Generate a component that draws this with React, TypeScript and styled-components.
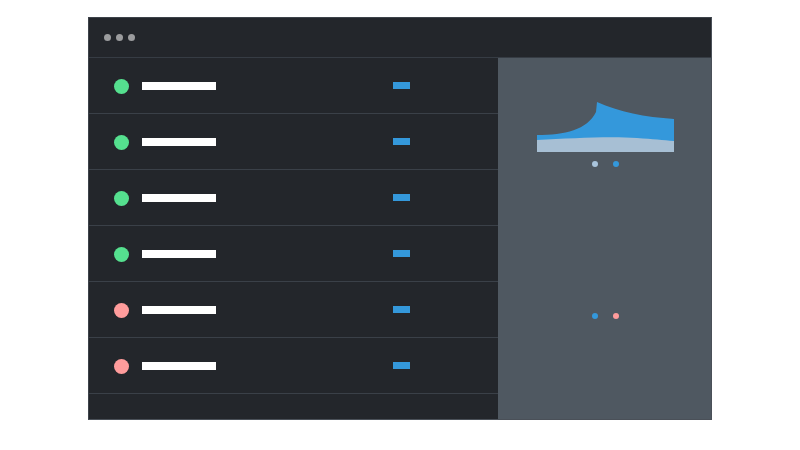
import styled, { createGlobalStyle } from 'styled-components';

const GlobalStyle = createGlobalStyle`
  html, body {
    margin: 0;
    padding: 0;
    background: #ffffff;
    font-family: "Liberation Sans", Arial, sans-serif;
  }
`;

const Page = styled.div`
  width: 800px;
  height: 450px;
  padding: 17px 0 0 88px;
  box-sizing: border-box;
`;

const Window = styled.div`
  width: 624px;
  height: 403px;
  background: #23262b;
  display: flex;
  flex-direction: column;
  box-sizing: border-box;
  border: 1px solid #4a5058;
  border-top-color: #3d434a;
  border-left-color: #3d434a;
`;

const TitleBar = styled.div`
  height: 40px;
  flex: none;
  display: flex;
  align-items: center;
  gap: 5px;
  padding-left: 15px;
  border-bottom: 1px solid #363c44;
  box-sizing: border-box;
`;

const TitleDot = styled.span`
  width: 7px;
  height: 7px;
  border-radius: 50%;
  background: #9b9c9e;
`;

const Body = styled.div`
  flex: 1;
  display: flex;
  min-height: 0;
`;

const List = styled.div`
  width: 409px;
  flex: none;
  display: flex;
  flex-direction: column;
`;

const Row = styled.div`
  height: 56px;
  flex: none;
  display: flex;
  align-items: center;
  padding-left: 25px;
  border-bottom: 1px solid #3a4048;
  box-sizing: border-box;
`;

const Status = styled.span<{ $color: string }>`
  width: 15px;
  height: 15px;
  border-radius: 50%;
  background: ${(p) => p.$color};
  margin-top: 2px;
`;

const Label = styled.span`
  width: 74px;
  height: 8px;
  background: #ffffff;
  margin-left: 13px;
`;

const Tag = styled.span`
  width: 17px;
  height: 7px;
  background: #3498db;
  margin-left: 177px;
`;

const Side = styled.div`
  flex: 1;
  background: #4f5861;
  display: flex;
  flex-direction: column;
  align-items: center;
  padding-top: 44px;
  padding-left: 2px;
`;

const DotPair = styled.div<{ $top: number }>`
  display: flex;
  gap: 15px;
  margin-top: ${(p) => p.$top}px;
`;

const Dot = styled.span<{ $color: string }>`
  width: 6px;
  height: 6px;
  border-radius: 50%;
  background: ${(p) => p.$color};
`;

const rows = ['#55e08f', '#55e08f', '#55e08f', '#55e08f', '#ff9c9c', '#ff9c9c'];

const Chart = () => (
  <svg width="137" height="50" viewBox="0 0 137 50">
    <path
      d="M0 33 C28 33 50 28 59 10 L60 0 C82 10 108 15 137 17 L137 50 L0 50 Z"
      fill="#3498db"
    />
    <path
      d="M0 38 C35 36 75 34 100 36 C116 37 126 38 137 39 L137 50 L0 50 Z"
      fill="#a7bfd4"
    />
  </svg>
);

export default function App() {
  return (
    <>
      <GlobalStyle />
      <Page>
        <Window>
          <TitleBar>
            <TitleDot />
            <TitleDot />
            <TitleDot />
          </TitleBar>
          <Body>
            <List>
              {rows.map((c, i) => (
                <Row key={i}>
                  <Status $color={c} />
                  <Label />
                  <Tag />
                </Row>
              ))}
            </List>
            <Side>
              <Chart />
              <DotPair $top={9}>
                <Dot $color="#a9c4dc" />
                <Dot $color="#3498db" />
              </DotPair>
              <DotPair $top={146}>
                <Dot $color="#3498db" />
                <Dot $color="#ff9c9c" />
              </DotPair>
            </Side>
          </Body>
        </Window>
      </Page>
    </>
  );
}
